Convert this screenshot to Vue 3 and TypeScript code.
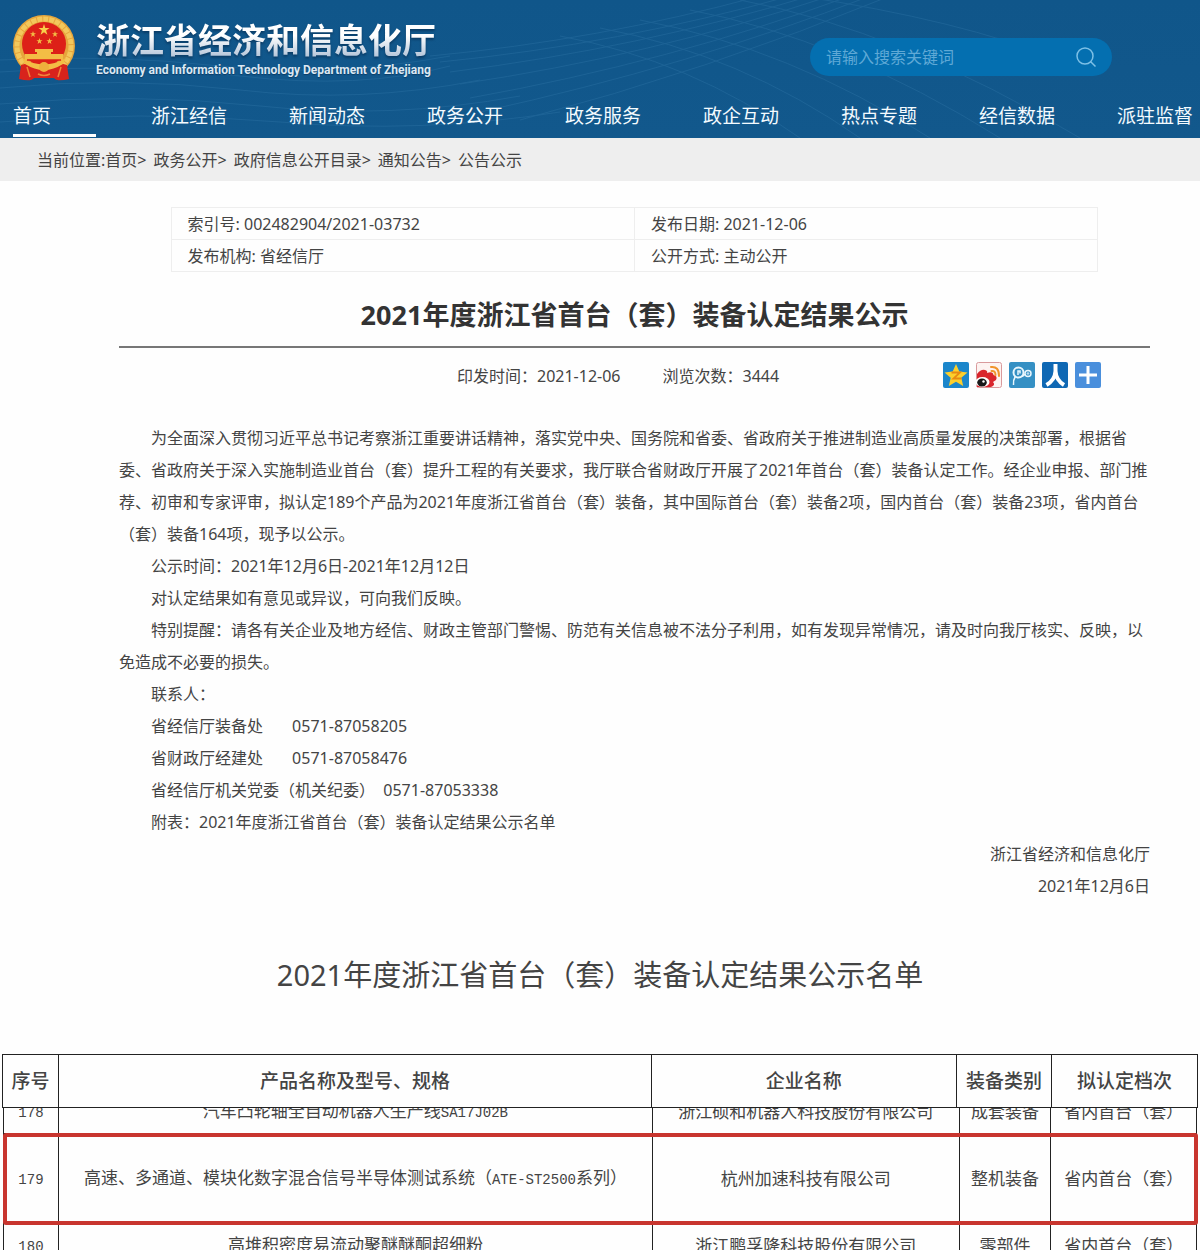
<script setup lang="ts">
interface ProductRow {
  no: string
  name: string
  model: string
  tail: string
  company: string
  kind: string
  level: string
  marked?: boolean
}

const navItems: string[] = ['首页', '浙江经信', '新闻动态', '政务公开', '政务服务', '政企互动', '热点专题', '经信数据', '派驻监督']
const crumbs: string[] = ['首页', '政务公开', '政府信息公开目录', '通知公告', '公告公示']

const paragraphs: string[] = [
  '为全面深入贯彻习近平总书记考察浙江重要讲话精神，落实党中央、国务院和省委、省政府关于推进制造业高质量发展的决策部署，根据省委、省政府关于深入实施制造业首台（套）提升工程的有关要求，我厅联合省财政厅开展了2021年首台（套）装备认定工作。经企业申报、部门推荐、初审和专家评审，拟认定189个产品为2021年度浙江省首台（套）装备，其中国际首台（套）装备2项，国内首台（套）装备23项，省内首台（套）装备164项，现予以公示。',
  '公示时间：2021年12月6日-2021年12月12日',
  '对认定结果如有意见或异议，可向我们反映。',
  '特别提醒：请各有关企业及地方经信、财政主管部门警惕、防范有关信息被不法分子利用，如有发现异常情况，请及时向我厅核实、反映，以免造成不必要的损失。',
  '联系人：',
  '省经信厅装备处       0571-87058205',
  '省财政厅经建处       0571-87058476',
  '省经信厅机关党委（机关纪委）  0571-87053338',
  '附表：2021年度浙江省首台（套）装备认定结果公示名单',
]

const columns: string[] = ['序号', '产品名称及型号、规格', '企业名称', '装备类别', '拟认定档次']

const rows: ProductRow[] = [
  { no: '178', name: '汽车凸轮轴全自动机器人生产线', model: 'SA17J02B', tail: '', company: '浙江硕和机器人科技股份有限公司', kind: '成套装备', level: '省内首台（套）' },
  { no: '179', name: '高速、多通道、模块化数字混合信号半导体测试系统（', model: 'ATE-ST2500', tail: '系列）', company: '杭州加速科技有限公司', kind: '整机装备', level: '省内首台（套）', marked: true },
  { no: '180', name: '高堆积密度易流动聚醚醚酮超细粉', model: '', tail: '', company: '浙江鹏孚隆科技股份有限公司', kind: '零部件', level: '省内首台（套）' },
]
</script>

<template>
  <div class="page" lang="zh-CN">
    <header class="banner">
      <svg class="waves" viewBox="0 0 1200 138" preserveAspectRatio="none" aria-hidden="true">
        <g fill="none" stroke="#6fb4e0" stroke-width="1">
          <path d="M430 56 Q600 40 760 -4 M440 62 Q620 44 790 -4 M450 72 Q640 48 810 -4 M460 84 Q650 56 830 -4 M470 98 Q670 62 850 -4 M480 112 Q690 66 870 -4 M520 120 Q710 70 890 -4" />
          <path d="M560 36 Q690 60 800 138 M600 28 Q740 54 860 138 M640 20 Q790 48 930 138 M690 10 Q840 38 1000 138 M740 0 Q900 30 1080 138 M800 -4 Q960 20 1060 60" />
          <path d="M0 60 Q110 54 220 66 T450 56 M0 72 Q120 62 240 76 T450 66 M0 88 Q120 76 240 90 T480 80 M0 104 Q130 92 260 106 T520 96 M0 122 Q140 110 280 122 T560 112" />
        </g>
      </svg>
      <div class="brand-row">
        <svg class="emblem" viewBox="0 0 62 66" role="img" aria-label="国徽">
          <circle cx="31" cy="31" r="31" fill="#e6a53c" />
          <circle cx="31" cy="31" r="27" fill="none" stroke="#f3c85c" stroke-width="5" stroke-dasharray="5 1" />
          <path d="M8 50 L19 47 Q31 54 43 47 L54 50 L56 64 Q44 67 41 63 H21 Q18 67 6 64 Z" fill="#d8231c" />
          <circle cx="31" cy="29" r="22" fill="#dd2018" />
          <path fill="#f8cf4a" d="M31 9 l1.300 4.100 h4.200 l-3.400 2.500 1.300 4.100 -3.400 -2.500 -3.400 2.500 1.300 -4.100 -3.400 -2.500 h4.200z" />
          <g fill="#f3bd45">
            <path d="M20 16 l.8 2.200 h2.300 l-1.900 1.400 .7 2.300 -1.900 -1.400 -1.900 1.400 .7 -2.300 -1.900 -1.400 h2.300z" />
            <path d="M42 16 l.8 2.200 h2.300 l-1.900 1.400 .7 2.300 -1.900 -1.400 -1.900 1.400 .7 -2.300 -1.900 -1.400 h2.300z" />
            <path d="M26.500 23 l.8 2.200 h2.300 l-1.900 1.400 .7 2.300 -1.900 -1.400 -1.900 1.400 .7 -2.300 -1.900 -1.400 h2.300z" />
            <path d="M36.500 23 l.8 2.200 h2.300 l-1.900 1.400 .7 2.300 -1.900 -1.400 -1.900 1.400 .7 -2.300 -1.900 -1.400 h2.300z" />
            <path d="M22 34 H40 V37 H38 V39 H50 V45 H12 V39 H24 V37 H22 Z" />
          </g>
          <path d="M9 43 Q31 56 53 43 L50 49 Q31 61 12 49 Z" fill="#f3bd45" />
          <path d="M14 45 H48" stroke="#dd2018" stroke-width="1.500" />
          <circle cx="31" cy="52" r="5" fill="#eeb03c" />
          <path d="M14 52 L17 62 M48 52 L45 62 M25 59 Q31 62 37 59" fill="none" stroke="#f0843a" stroke-width="1.500" />
        </svg>
        <div class="brand">
          <h1 class="site-name">浙江省经济和信息化厅</h1>
          <p class="site-en">Economy and Information Technology Department of Zhejiang</p>
        </div>
        <form class="search" role="search" @submit.prevent>
          <input type="text" placeholder="请输入搜索关键词" aria-label="搜索关键词" />
          <button type="submit" aria-label="搜索">
            <svg viewBox="0 0 20 20" fill="none" stroke="#7dc0e6" stroke-width="1.500">
              <circle cx="9" cy="9" r="8" />
              <path d="M14.500 14.500 L19.500 19.500" />
            </svg>
          </button>
        </form>
      </div>
      <nav>
        <ul class="nav">
          <li v-for="(item, i) in navItems" :key="item">
            <a href="#" :class="{ active: i === 0 }">{{ item }}</a>
          </li>
        </ul>
      </nav>
    </header>

    <div class="crumbs">
      当前位置:<template v-for="(c, i) in crumbs" :key="c"><a href="#">{{ c }}</a><span v-if="i < crumbs.length - 1" class="sep">&gt;</span></template>
    </div>

    <main class="article">
      <table class="meta">
        <tbody>
          <tr>
            <td>索引号: 002482904/2021-03732</td>
            <td>发布日期: 2021-12-06</td>
          </tr>
          <tr>
            <td>发布机构: 省经信厅</td>
            <td>公开方式: 主动公开</td>
          </tr>
        </tbody>
      </table>

      <h2 class="title">2021年度浙江省首台（套）装备认定结果公示</h2>

      <div class="info">
        <span class="printed">印发时间：2021-12-06</span>
        <span>浏览次数：3444</span>
        <div class="share">
          <button type="button" aria-label="分享到QQ空间">
            <svg viewBox="0 0 26 26">
              <rect width="26" height="26" rx="2" fill="#1b86cb" />
              <path d="M13 2 L16.300 9.600 L24.500 10.400 L18.300 15.800 L20.200 24 L13 19.700 L5.800 24 L7.700 15.800 L1.500 10.400 L9.700 9.600 Z" fill="#fccf2c" />
              <path d="M8.500 10.500 H17 L10.500 16.500 H18.500" fill="none" stroke="#e88a12" stroke-width="1.800" />
            </svg>
          </button>
          <button type="button" aria-label="分享到新浪微博">
            <svg viewBox="0 0 26 26">
              <rect x=".5" y=".5" width="25" height="25" rx="2" fill="#fdf3f1" stroke="#d99a9c" />
              <path d="M1 12 Q5 7 9 8 Q12 9 11 11 Q17 9 17.500 13 Q22 14 20 18 L17 20 Q20 23 15 25 H1 Z" fill="#d9252c" />
              <ellipse cx="6.500" cy="20" rx="7" ry="5" fill="#fff" />
              <ellipse cx="6" cy="20.500" rx="4.800" ry="4" fill="#181818" />
              <circle cx="7.500" cy="19.500" r="1.200" fill="#fff" />
              <path d="M15 5 Q23 4 23 14 M15.500 9 Q19.500 8.500 19.500 13" fill="none" stroke="#f0942c" stroke-width="2" stroke-linecap="round" />
            </svg>
          </button>
          <button type="button" aria-label="分享到腾讯微博">
            <svg viewBox="0 0 26 26">
              <rect width="26" height="26" rx="2" fill="#3590c4" />
              <g fill="none" stroke="#e8f6fd">
                <circle cx="9.500" cy="10.500" r="5" stroke-width="2" />
                <path d="M9 13 V9 H11 V11.500" stroke-width="1.500" />
                <path d="M6.500 14 Q4 18 4.500 23" stroke-width="1.500" />
                <circle cx="19" cy="11.500" r="3" stroke-width="1.500" />
                <circle cx="19" cy="11.500" r=".8" />
                <path d="M12.500 14.500 Q15 14 16 12" stroke-width="1.500" />
              </g>
            </svg>
          </button>
          <button type="button" aria-label="分享到人人网">
            <svg viewBox="0 0 26 26">
              <rect width="26" height="26" rx="2" fill="#0f68b4" />
              <path d="M13.500 2 V9 Q13 18 4.500 23 M13.500 9 Q14 18 22 23" fill="none" stroke="#fff" stroke-width="4" />
            </svg>
          </button>
          <button type="button" aria-label="更多分享">
            <svg viewBox="0 0 26 26">
              <rect width="26" height="26" rx="2" fill="#4a8fdc" />
              <path d="M13 4 V22 M4 13 H22" stroke="#fff" stroke-width="3" />
            </svg>
          </button>
        </div>
      </div>

      <div class="content">
        <p v-for="p in paragraphs" :key="p">{{ p }}</p>
        <p class="sign">浙江省经济和信息化厅</p>
        <p class="sign">2021年12月6日</p>
      </div>
    </main>

    <section class="list">
      <h2 class="list-title">2021年度浙江省首台（套）装备认定结果公示名单</h2>
      <table class="grid head">
        <colgroup><col class="h1" /><col class="h2" /><col class="h3" /><col class="h4" /><col /></colgroup>
        <thead>
          <tr><th v-for="c in columns" :key="c" scope="col">{{ c }}</th></tr>
        </thead>
      </table>
      <div class="viewport">
        <table class="grid body" aria-label="装备认定结果公示名单">
          <colgroup><col class="b1" /><col class="b2" /><col class="b3" /><col class="b4" /><col /></colgroup>
          <tbody>
            <tr v-for="r in rows" :key="r.no" :class="{ marked: r.marked }">
              <td><span class="mono">{{ r.no }}</span></td>
              <td>{{ r.name }}<span class="mono">{{ r.model }}</span>{{ r.tail }}</td>
              <td>{{ r.company }}</td>
              <td>{{ r.kind }}</td>
              <td>{{ r.level }}</td>
            </tr>
          </tbody>
        </table>
      </div>
    </section>
  </div>
</template>

<style>
body {
  background: #fefefe;
}
</style>

<style scoped>
.page {
  font-family: "Noto Sans", "Noto Sans CJK SC", sans-serif;
  font-size: 16px;
  color: #444;
  text-spacing-trim: space-all;
  overflow: hidden;
}

h1, h2, p, ul {
  margin: 0;
  padding: 0;
}

a {
  color: inherit;
  text-decoration: none;
}

button {
  padding: 0;
  border: 0;
  background: none;
  cursor: pointer;
}

svg {
  display: block;
}

.banner {
  position: relative;
  background: linear-gradient(#10568a, #12588c);
  color: #f4fbff;
}

.waves {
  position: absolute;
  inset: 0;
  width: 100%;
  height: 100%;
  opacity: 0.12;
}

.brand-row {
  position: relative;
  display: flex;
  align-items: flex-start;
  height: 94px;
  padding: 0 88px 0 13px;
  box-sizing: border-box;
}

.emblem {
  width: 62px;
  height: 66px;
  margin-top: 15px;
}

.brand {
  margin: 18px 0 0 21px;
}

.site-name {
  font-size: 34px;
  line-height: 44px;
  font-weight: 700;
  background: linear-gradient(#fff 40%, #b9c9dc 85%);
  background-clip: text;
  color: transparent;
  filter: drop-shadow(0 2px 1px #0a3c66);
}

.site-en {
  font: 700 12px/16px Roboto, "Liberation Sans", sans-serif;
  color: #dce8f3;
  text-shadow: 0 1px 1px #0a3c66;
}

.search {
  display: flex;
  align-items: center;
  width: 302px;
  height: 38px;
  margin: 38px 0 0 auto;
  padding: 0 16px;
  box-sizing: border-box;
  border-radius: 19px;
  background: #046fb0;
}

.search input {
  flex: 1;
  min-width: 0;
  padding: 0;
  border: 0;
  outline: 0;
  background: none;
  font: inherit;
  color: #fff;
}

.search input::placeholder {
  color: #5fa9d6;
  opacity: 1;
}

.search svg {
  width: 20px;
  height: 20px;
}

.nav {
  position: relative;
  display: flex;
  list-style: none;
  overflow: hidden;
}

.nav li {
  flex: 0 0 11.5%;
  padding-left: 13px;
  box-sizing: border-box;
}

.nav a {
  display: block;
  height: 40px;
  font-size: 19px;
  line-height: 44px;
  white-space: nowrap;
  margin-bottom: 4px;
}

.nav a.active {
  width: 83px;
  border-bottom: 3px solid #fff;
  margin-bottom: 1px;
}

.crumbs {
  padding: 1px 37px 0;
  background: #eee;
  line-height: 42px;
}

.sep {
  margin-right: 7px;
}

.article {
  padding: 26px 50px 0 119px;
}

.meta {
  width: 90%;
  margin: 0 auto;
  border-collapse: collapse;
  table-layout: fixed;
}

.meta td {
  height: 31px;
  padding: 0 0 0 16px;
  border: 1px solid #eee;
  line-height: 30px;
}

.title {
  padding: 23px 0 11px;
  border-bottom: 2px solid #777;
  font-size: 27px;
  line-height: 40px;
  font-weight: 700;
  text-align: center;
  color: #333;
}

.info {
  display: flex;
  align-items: center;
  height: 54px;
  padding: 0 49px 0 338px;
}

.printed {
  margin-right: 42px;
}

.share {
  display: flex;
  gap: 7px;
  margin-left: auto;
}

.share svg {
  width: 26px;
  height: 26px;
}

.content {
  padding-top: 20px;
  line-height: 32px;
}

.content p {
  text-indent: 2em;
  white-space: pre-wrap;
}

.content .sign {
  text-align: right;
}

.list-title {
  padding: 53px 0 59px;
  font-size: 29px;
  line-height: 40px;
  font-weight: 400;
  text-align: center;
}

.grid {
  border-collapse: collapse;
  table-layout: fixed;
  text-align: center;
}

.grid th,
.grid td {
  padding: 0;
  border: 1px solid #222;
  white-space: nowrap;
}

.head {
  width: calc(100% - 4px);
  margin: 0 2px;
}

.head th {
  height: 50px;
  padding-bottom: 2px;
  font-size: 19px;
  font-weight: 500;
}

.viewport {
  height: 142px;
  overflow: hidden;
}

.body {
  width: calc(100% - 6px);
  margin: -19px 3px 0;
  font-size: 17px;
  line-height: 24px;
}

.body td {
  height: 43px;
}

.body .marked td {
  height: 89px;
}

.marked {
  outline: 4px solid #c8352e;
  outline-offset: -3px;
  border-radius: 2px;
}

.mono {
  font-family: "Liberation Mono", monospace;
  font-size: 14px;
}

.h1 { width: 4.7%; }
.h2 { width: 49.6%; }
.h3 { width: 25.5%; }
.h4 { width: 8%; }
.b1 { width: 4.6%; }
.b2 { width: 49.8%; }
.b3 { width: 25.7%; }
.b4 { width: 7.7%; }
</style>
